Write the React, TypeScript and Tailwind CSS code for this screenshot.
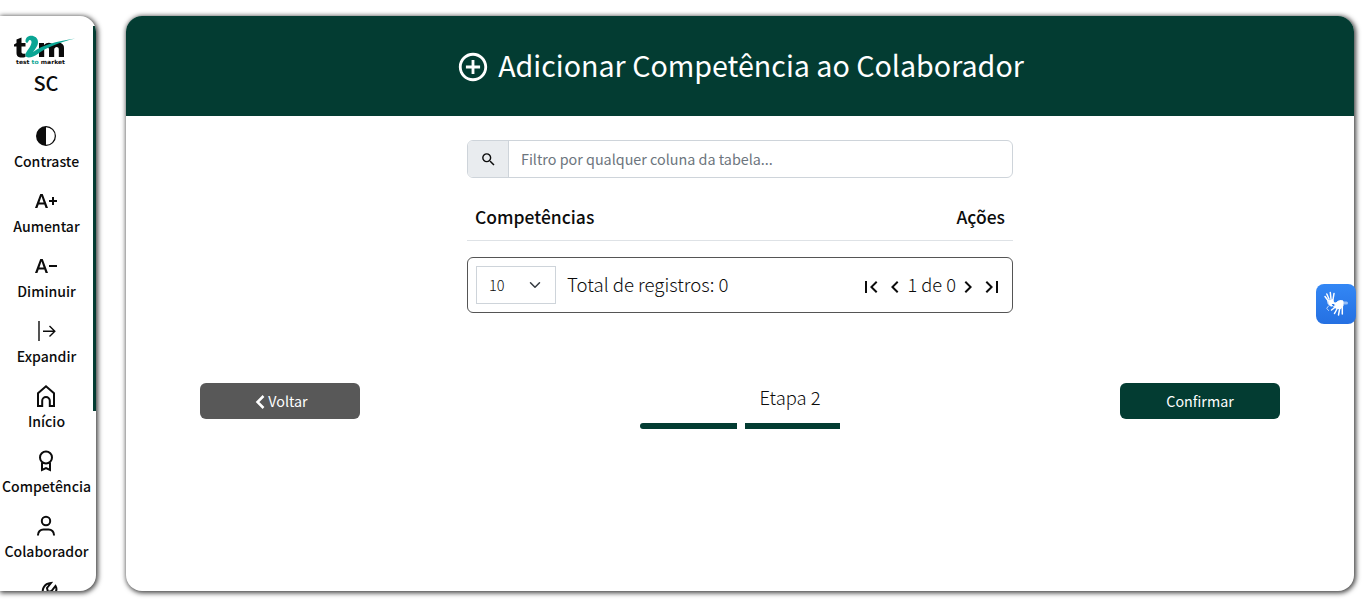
import type { ReactNode } from 'react';
import { MdTextIncrease, MdTextDecrease, MdAddCircleOutline, MdSearch, MdFirstPage, MdLastPage, MdChevronLeft, MdChevronRight } from 'react-icons/md';
import { BsCircleHalf } from 'react-icons/bs';

function Line({ children, w = 2 }: { children: ReactNode; w?: number }) {
  return (
    <svg width="24" height="24" viewBox="0 0 24 24" fill="none" stroke="currentColor" strokeWidth={w}>
      {children}
    </svg>
  );
}

const items: { label: string; icon: ReactNode }[] = [
  { label: 'Contraste', icon: <BsCircleHalf size={20} /> },
  { label: 'Aumentar', icon: <MdTextIncrease size={24} /> },
  { label: 'Diminuir', icon: <MdTextDecrease size={24} /> },
  { label: 'Expandir', icon: <Line w={1.4}><path d="M5 2v20M9 12.2h11.5M15.5 7l5.3 5.2-5.3 5.2" /></Line> },
  { label: 'Início', icon: <Line><path d="M4 22V9.300L12 2.300 20 9.300V22h-4.200v-5.200a3.800 3.800 0 0 0-7.600 0V22z" /></Line> },
  { label: 'Competência', icon: <Line><circle cx="12" cy="8.500" r="6" /><path d="M8 13.500v7.500l4-2 4 2v-7.500" /></Line> },
  { label: 'Colaborador', icon: <Line><circle cx="12" cy="7" r="4.200" /><path d="M4 21.500v-.6A5.400 5.400 0 0 1 9.400 15.500h5.200A5.400 5.400 0 0 1 20 20.900v.6" /></Line> },
];

function Logo() {
  return (
    <svg width="64" height="32" viewBox="0 0 64 32" className="shrink-0" fill="#0b0b0b">
      <path d="M2.500 4.500 7.500 2.500V8h4v3.500h-4V17c0 1.800 1.500 2 4 1.400V22c-5 1.400-9 .5-9-4v-6.500H0V9.500l2.500-1.500z" />
      <path d="M25 8h5v2c3-3 7-3 9 0 3-3 11-3.500 11 3v9h-5.200v-7.500c0-3.500-4.600-3-4.600.2V22H35v-7.500c0-3.500-4.800-3-4.800.2V22H25z" />
      <path d="M11.500 6c0-7.500 12.500-7 12.500 1 0 4-3 7.500-5 10 10-7 22-10.500 42-13.500-16 4-29 9-38 16-3 2.500-11 4.500-11.500 1-.3-4 5.500-8 6-13 .2-3-2.500-3.500-3.200-1-.5 2-2.800 1.500-2.800-.5z" fill="#0aa594" />
      <text x="2" y="28.500" fontFamily="DejaVu Sans" fontWeight="700" fontSize="5.600" textLength="49" lengthAdjust="spacingAndGlyphs">test <tspan fill="#0aa594">to</tspan> market</text>
    </svg>
  );
}

export default function App() {
  return (
    <div className="flex h-[607px] w-[1366px] gap-[30px] overflow-hidden bg-white pt-4 font-['Noto_Sans_CJK_JP',sans-serif] text-[#0c0c0c]">
      <aside className="flex h-[575px] w-[96px] shrink-0 overflow-hidden rounded-r-2xl bg-white shadow-[1px_1px_5px_1px_rgba(0,0,0,0.75)]">
        <div className="flex w-[92px] shrink-0 flex-col items-center pt-[19px]">
          <div className="flex h-8 w-16 shrink-0"><Logo /></div>
          <div className="mt-px h-[30px] shrink-0 text-[20px] leading-[30px] font-medium">SC</div>
          <nav className="mt-[26px] flex flex-col items-center">
            {items.map((i) => (
              <a key={i.label} className="flex h-[65px] shrink-0 flex-col items-center">
                <span className="flex h-6 items-center">{i.icon}</span>
                <span className="mt-px ml-px text-[14.050px] leading-6 font-medium whitespace-nowrap">{i.label}</span>
              </a>
            ))}
            <span className="ml-1">
              <Line><path d="M3 22l5-7c-3-4 0-10.500 7-11l-4 5 1 4 3.500-1 4-5c2.500 4-.500 9.500-6 9.500l-4 6" /></Line>
            </span>
          </nav>
        </div>
        <div className="mt-[10px] ml-px h-[385px] w-[3px] shrink-0 bg-[#033c32]" />
      </aside>

      <main className="flex h-[575px] w-[1228px] shrink-0 flex-col overflow-hidden rounded-2xl bg-white shadow-[1px_1px_5px_1px_rgba(0,0,0,0.75)]">
        <header className="flex h-[100px] shrink-0 items-center justify-center gap-[8px] bg-[#033c32] text-white">
          <MdAddCircleOutline size={34} className="mt-px" />
          <h1 className="mb-0.5 text-[28.650px] leading-10 whitespace-nowrap">Adicionar Competência ao Colaborador</h1>
        </header>
        <section className="mx-auto mt-6 flex w-[546px] flex-col">
          <div className="flex h-[38px] overflow-hidden rounded-md border border-[#ced4da]">
            <span className="flex w-[41px] items-center justify-center border-r border-[#ced4da] bg-[#e9ecef]"><MdSearch size={17} /></span>
            <span className="pl-3 text-[14.350px] leading-9 text-[#6c757d]">Filtro por qualquer coluna da tabela...</span>
          </div>
          <div className="mt-4 flex h-[47px] justify-between border-b border-[#dee2e6] px-2 text-[17.500px] leading-[46px] font-medium">
            <span>Competências</span>
            <span>Ações</span>
          </div>
          <div className="mt-4 flex h-14 items-center rounded-md border border-[#555] px-2">
            <div className="flex h-[38px] w-20 items-center justify-between border border-[#ced4da] pr-[14px] pl-3">
              <span className="text-[14.500px] font-light">10</span>
              <svg width="12" height="12" viewBox="0 0 16 16" fill="none" stroke="#343a40" strokeWidth="2" strokeLinecap="round" strokeLinejoin="round"><path d="m2 5 6 6 6-6" /></svg>
            </div>
            <span className="mb-0.5 ml-[11px] text-[18.600px] font-light">Total de registros: 0</span>
            <div className="ml-auto flex items-center text-[18.300px] font-light">
              <MdFirstPage size={24} className="mt-[3px]" />
              <MdChevronLeft size={24} className="mt-[3px]" />
              <span className="whitespace-nowrap">1 de 0</span>
              <MdChevronRight size={24} className="mt-[3px]" />
              <MdLastPage size={24} className="mt-[3px]" />
            </div>
          </div>
        </section>
        <footer className="mt-[70px] flex justify-between px-[74px]">
          <button className="flex h-9 w-40 items-center justify-center gap-[2px] rounded-md bg-[#585858] pl-0.5 text-[14.300px] text-white">
            <svg width="12" height="16" viewBox="0 0 12 16" fill="none" stroke="currentColor" strokeWidth="2.500" className="mt-0.5"><path d="m9.500 2-6 6 6 6" /></svg>
            Voltar
          </button>
          <div className="flex w-[200px] flex-col">
            <span className="ml-[100px] h-10 text-center text-[18.400px] leading-[29px] font-light">Etapa 2</span>
            <div className="flex gap-2">
              <span className="h-1.5 w-[97px] rounded-l-full bg-[#033c32]" />
              <span className="h-1.5 w-[95px] bg-[#033c32]" />
            </div>
          </div>
          <button className="h-9 w-40 rounded-md bg-[#033c32] text-[14.300px] text-white">Confirmar</button>
        </footer>
      </main>

      <button aria-label="Libras" className="absolute top-[284px] left-[1316px] flex h-10 w-10 items-center justify-center rounded-lg bg-linear-to-b from-[#3387f5] to-[#2570e2]">
        <svg width="40" height="40" viewBox="0 0 40 40" fill="none" stroke="white" strokeLinecap="round" strokeLinejoin="round">
          <path d="M12 16.500 9 12.500M13 15 10.800 10M15 15 14.300 8.500M17 15.500l1-6" strokeWidth="1.500" />
          <path d="M12 16.500l5-1 .5 3-2 2 1 1.500-2 0-2-2z" fill="white" />
          <path d="M12.500 22l-1.800 2.500 2 2" strokeWidth="1" opacity=".7" />
          <path d="M16 18.500l4 .5c2-2.500 5-3 7-2v5l-2 2.500h-4l-3.500-1.500 2-2z" fill="white" />
          <path d="m19.500 23-4 3M21.500 24l-3 5.500M23.800 24l-1.300 7M26.300 23l0 7" strokeWidth="1.500" />
          <path d="M28 19h2.500" strokeWidth="3" opacity=".5" />
        </svg>
      </button>
    </div>
  );
}
